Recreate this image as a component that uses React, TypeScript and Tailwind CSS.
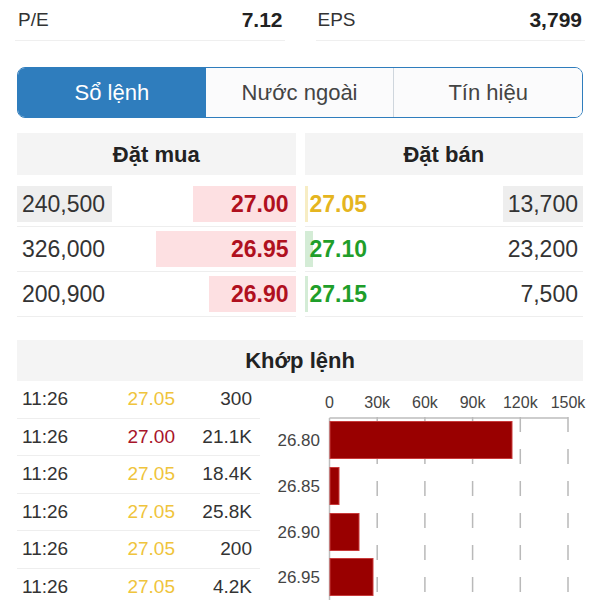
import React from "react";

const book = [
  { bv: "240,500", bp: "27.00", bw: 103, bhl: true, sp: "27.05", sc: "text-[#e5b520]", sbar: "bg-[#f7edc4]", sw: 3, sv: "13,700", shl: true },
  { bv: "326,000", bp: "26.95", bw: 140, bhl: false, sp: "27.10", sc: "text-[#1f9e2a]", sbar: "bg-[#d4ecd6]", sw: 8, sv: "23,200", shl: false },
  { bv: "200,900", bp: "26.90", bw: 87, bhl: false, sp: "27.15", sc: "text-[#1f9e2a]", sbar: "bg-[#d4ecd6]", sw: 3, sv: "7,500", shl: false },
];

const trades = [
  { t: "11:26", p: "27.05", c: "text-[#efc43c]", v: "300" },
  { t: "11:26", p: "27.00", c: "text-[#a8142a]", v: "21.1K" },
  { t: "11:26", p: "27.05", c: "text-[#efc43c]", v: "18.4K" },
  { t: "11:26", p: "27.05", c: "text-[#efc43c]", v: "25.8K" },
  { t: "11:26", p: "27.05", c: "text-[#efc43c]", v: "200" },
  { t: "11:26", p: "27.05", c: "text-[#efc43c]", v: "4.2K" },
];

function Chart() {
  const x0 = 69.5;
  const step = 47.7;
  const ticks = ["0", "30k", "60k", "90k", "120k", "150k"];
  const bars = [
    { l: "26.80", w: 182, y: 38 },
    { l: "26.85", w: 9, y: 84 },
    { l: "26.90", w: 29, y: 130 },
    { l: "26.95", w: 43, y: 175 },
  ];
  return (
    <svg width="340" height="217" viewBox="0 0 340 217" className="block">
      {ticks.map((t, i) => (
        <text
          key={t}
          x={x0 + i * step}
          y={25}
          textAnchor="middle"
          fontSize="16"
          fill="#444"
          fontFamily="'Liberation Sans', Arial, sans-serif"
        >
          {t}
        </text>
      ))}
      {ticks.slice(1).map((t, i) => (
        <line
          key={"g" + t}
          x1={x0 + (i + 1) * step}
          x2={x0 + (i + 1) * step}
          y1={34}
          y2={217}
          stroke="#b9b9b9"
          strokeWidth="1.5"
          strokeDasharray="15 17"
        />
      ))}
      <line x1={x0} x2={x0 + 5 * step} y1={35} y2={35} stroke="#bdbdbd" strokeWidth="1.5" />
      <line x1={x0} x2={x0} y1={35} y2={217} stroke="#bdbdbd" strokeWidth="1.5" />
      {bars.map((b) => (
        <g key={b.l}>
          <rect x={x0 + 0.5} y={b.y + 0.5} width={b.w} height={37} fill="#990000" stroke="#c83a3a" strokeWidth="1" />
          <text
            x={60}
            y={b.y + 25}
            textAnchor="end"
            fontSize="17"
            fill="#444"
            fontFamily="'Liberation Sans', Arial, sans-serif"
          >
            {b.l}
          </text>
        </g>
      ))}
    </svg>
  );
}

export default function App() {
  return (
    <div className="w-[600px] h-[600px] overflow-hidden bg-white text-[#333] font-['Liberation_Sans',Arial,sans-serif]">
      {/* Stats */}
      <div className="mx-[15px] flex gap-[31px]">
        <div className="flex-1 flex items-center justify-between h-[41px] border-b border-[#efefef] pl-[3px] pr-[2px]">
          <span className="text-[19px]">P/E</span>
          <span className="text-[21px] font-bold text-[#222]">7.12</span>
        </div>
        <div className="flex-1 flex items-center justify-between h-[41px] border-b border-[#efefef] pl-[2px] pr-[3px]">
          <span className="text-[19px]">EPS</span>
          <span className="text-[21px] font-bold text-[#222]">3,799</span>
        </div>
      </div>

      {/* Tabs */}
      <div className="mx-[17px] mt-[26px] h-[51px] flex rounded-[8px] border-[1.5px] border-[#2f7dbd] overflow-hidden text-[22px]">
        <div className="flex-1 flex items-center justify-center bg-[#2f7dbd] text-white">Sổ lệnh</div>
        <div className="flex-1 flex items-center justify-center bg-[#fbfbfc] text-[#444]">Nước ngoài</div>
        <div className="flex-1 flex items-center justify-center bg-[#fbfbfc] text-[#444] border-l border-[#cfd6dd]">Tín hiệu</div>
      </div>

      {/* Order book */}
      <div className="mx-[17px] mt-[15px] flex gap-[9px]">
        <div className="flex-1">
          <div className="h-[42px] bg-[#f4f4f4] flex items-center justify-center text-[22px] font-bold text-[#222]">Đặt mua</div>
          <div className="mt-[7px]">
            {book.map((r) => (
              <div key={r.bv} className="h-[45px] border-b border-[#eeeeee] py-[4px] flex">
                <div className={"h-full flex items-center pl-[5px] pr-[7px] text-[23px] " + (r.bhl ? "bg-[#eeeeee]" : "")}>{r.bv}</div>
                <div className="flex-1 h-full flex justify-end">
                  <div
                    className="h-full bg-[#fde0e2] flex items-center justify-end pr-[7px] text-[23px] font-bold text-[#b0101e]"
                    style={{ width: r.bw }}
                  >
                    {r.bp}
                  </div>
                </div>
              </div>
            ))}
          </div>
        </div>
        <div className="flex-1">
          <div className="h-[42px] bg-[#f4f4f4] flex items-center justify-center text-[22px] font-bold text-[#222]">Đặt bán</div>
          <div className="mt-[7px]">
            {book.map((r) => (
              <div key={r.sv} className="h-[45px] border-b border-[#eeeeee] py-[4px] flex">
                <div className="relative h-full flex items-center pl-[5px] text-[23px] font-bold">
                  <div className={"absolute left-0 top-0 bottom-0 " + r.sbar} style={{ width: r.sw }} />
                  <span className={"relative " + r.sc}>{r.sp}</span>
                </div>
                <div className="flex-1" />
                <div className={"h-full flex items-center pl-[5px] pr-[5px] text-[23px] " + (r.shl ? "bg-[#eeeeee]" : "")}>{r.sv}</div>
              </div>
            ))}
          </div>
        </div>
      </div>

      {/* Khớp lệnh */}
      <div className="mx-[17px] mt-[23px] h-[41px] bg-[#f4f4f4] flex items-center justify-center text-[22px] font-bold text-[#222]">
        Khớp lệnh
      </div>
      <div className="ml-[17px] flex">
        <div className="w-[243px] shrink-0">
          {trades.map((r, i) => (
            <div key={i} className="h-[37.6px] flex items-center border-b border-[#eeeeee] text-[19px]">
              <span className="w-[96px] pl-[5px]">{r.t}</span>
              <span className={"w-[62px] text-right " + r.c}>{r.p}</span>
              <span className="flex-1 text-right pr-[8px]">{r.v}</span>
            </div>
          ))}
        </div>
        <div className="pt-[2px] shrink-0">
          <Chart />
        </div>
      </div>
    </div>
  );
}
